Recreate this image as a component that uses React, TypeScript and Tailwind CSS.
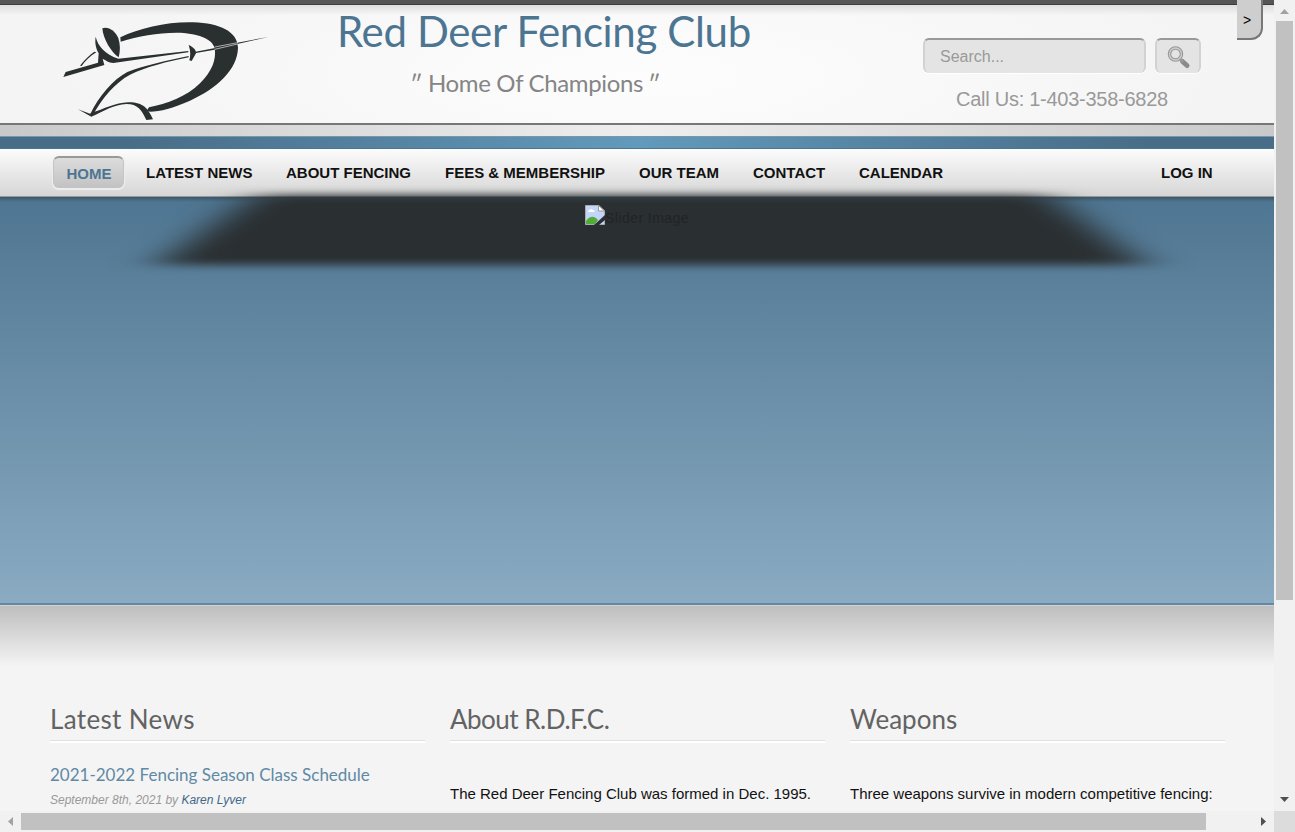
import type { ReactNode } from "react";

const heading = "font-['Lato',sans-serif] whitespace-nowrap";

function Logo() {
  return (
    <svg className="block h-[130px] w-[230px] shrink-0" viewBox="0 0 690 390" fill="#2a2f30">
      <path d="M211 112C270 84 350 65 430 67C510 70 562 94 564 143C562 210 500 265 420 302C370 324 330 335 300 335L290 332L297 322C350 312 410 290 450 250C484 216 500 180 494 145C488 115 440 99 380 98C320 98 265 109 212 125Z" />
      <path d="M157 85C173 78 196 91 205 115C211 133 211 154 206 172C185 158 160 120 157 85Z" />
      <path d="M137 110C143 137 165 163 205 176L415 153V157L190 189C175 188 168 181 158 176L163 195L40 231L47 216L144 188L146 160C138 145 134 130 137 110Z" />
      <path d="M90 197C105 178 120 164 133 155L139 157C120 168 105 184 95 198Z" />
      <path d="M416 135C430 141 439 150 438 160L425 183L418 181C422 168 422 152 416 135Z" />
      <path d="M437 155L495 144L494 149L438 159ZM562 128L655 111L562 132Z" />
      <path d="M494 141L563 128M494 148L563 132" stroke="#eee" strokeWidth="2" fill="none" />
      <path d="M416 168C350 182 285 196 232 216C190 238 147 288 121 342L129 345C155 296 195 248 240 224C290 201 350 185 416 172Z" />
      <path d="M84 328L120 341C165 325 195 309 234 307C280 306 294 326 309 358L289 360C275 330 263 312 230 312C190 314 165 332 124 350Z" />
    </svg>
  );
}

function SearchIcon() {
  return (
    <svg className="ml-[2px] h-6 w-6" viewBox="0 0 24 24" fill="none">
      <path d="M15.5 15.5L20 19.5" stroke="#8b8b8b" strokeWidth="5" strokeLinecap="round" />
      <path d="M12 12L16 16" stroke="#999" strokeWidth="2.5" />
      <circle cx="8.5" cy="8" r="6" stroke="#979797" strokeWidth="3.5" />
      <circle cx="8.5" cy="8" r="6" stroke="#cfcfcf" strokeWidth="1.3" />
    </svg>
  );
}

function Header() {
  return (
    <header className="h-[118px] bg-[radial-gradient(ellipse_600px_150px_at_637px_70px,#fdfdfd,#f4f4f4)]">
      <div className="flex h-[118px] bg-[linear-gradient(#dedede,#dedede00_10px)] pl-[50px]">
        <div className="-mt-[5px]"><Logo /></div>
        <div className="w-[530px] pl-[57px]">
          <h1 className={`${heading} mt-[2px] text-[42px] leading-[48px] tracking-[-0.35px] text-[#4c7592]`}>Red Deer Fencing Club</h1>
          <p className={`${heading} mt-[14px] flex pl-[73px] text-[24px] leading-[28px] tracking-[-0.35px] text-[#858585]`}><span className="w-[18px] tracking-[-3px]">′′</span><span className="w-[220px]">Home Of Champions</span><span className="tracking-[-3px]">′′</span></p>
        </div>
        <div className="ml-[113px] w-[290px] pt-[33px]">
          <div className="flex gap-[9px]">
            <div className="flex h-[35px] w-[223px] items-center rounded-md border-x-2 border-t-2 border-x-[#d2d2d2] border-t-[#999] bg-[#e4e4e4] pl-[15px] text-[16px] text-[#9a9a9a] shadow-[0_1px_1px_white]">Search...</div>
            <div className="flex h-[35px] w-[46px] items-center justify-center rounded-md border-x-2 border-t-2 border-x-[#d2d2d2] border-t-[#999] bg-[#e4e4e4] pt-[2px] shadow-[0_1px_1px_white]"><SearchIcon /></div>
          </div>
          <p className="mt-[14px] pl-[33px] text-[20px] leading-6 tracking-[-0.26px] whitespace-nowrap text-[#999]">Call Us: 1-403-358-6828</p>
        </div>
      </div>
    </header>
  );
}

const links = [
  { label: "LATEST NEWS", width: "w-[140px]" },
  { label: "ABOUT FENCING", width: "w-[159px]" },
  { label: "FEES & MEMBERSHIP", width: "w-[194px]" },
  { label: "OUR TEAM", width: "w-[114px]" },
  { label: "CONTACT", width: "w-[106px]" },
  { label: "CALENDAR", width: "w-[302px]" },
  { label: "LOG IN", width: "w-[60px]" },
];

function Nav() {
  return (
    <nav className="flex h-[48px] items-center border-b border-[#999] bg-linear-to-b from-[#fcfcfc] to-[#d6d6d6] pl-[53px] text-[15px] font-bold whitespace-nowrap text-[#111]">
      <a className="-mt-px mr-[22px] flex h-[32px] w-[71px] items-center justify-center rounded-md border-x border-t-2 border-x-[#c4c4c4] border-t-[#999] bg-linear-to-b from-[#dcdcdc] to-[#c2c2c2] pt-[2px] pl-px text-[#4c7592] shadow-[0_1px_1px_1px_#eee]">HOME</a>
      {links.map((l) => <a key={l.label} className={`pt-[2px] ${l.width}`}>{l.label}</a>)}
    </nav>
  );
}

function BrokenImage() {
  return (
    <svg className="block h-5 w-5" viewBox="0 0 20 20">
      <path d="M0.5 0.5H14L19.5 6V19.5H0.5Z" fill="#c3d6fa" stroke="#aaa" />
      <path d="M3 7C3 5 5 5 6 4C7 4 8 5 8 5C10 5 10 7 9 7Z" fill="white" />
      <path d="M1 19V16C5 10 10 11 13 15L10 19Z" fill="#52ad38" />
      <path d="M20 10L9 20H14L20 15Z" fill="#2a2f31" />
      <path d="M13.5 0.5V6H19.5Z" fill="#fff" stroke="#999" />
    </svg>
  );
}

function Hero() {
  return (
    <section className="relative h-[408px] border-b-2 border-[#6288a5] bg-[linear-gradient(#3c5769,#3c576900_5px),linear-gradient(#4e7591,#8aabc2)]">
      <svg className="absolute -top-3 left-0 h-[110px] w-[1274px]" viewBox="0 0 1274 110">
        <filter id="soft" x="-10%" y="-30%" width="120%" height="160%" colorInterpolationFilters="sRGB"><feGaussianBlur stdDeviation="23 4" /></filter>
        <path d="M256 10H1048L1147 80H156Z" fill="#2a2f31" filter="url(#soft)" />
      </svg>
      <div className="relative flex pt-[8px] pl-[585px] text-[14px] leading-[26px] tracking-[0.45px] text-[#202426]"><BrokenImage /><span>Slider Image</span></div>
    </section>
  );
}

function Column({ title, size, children }: { title: string; size: string; children: ReactNode }) {
  return (
    <section className="w-[375px]">
      <h2 className={`${heading} h-[39px] border-b border-[#e0e0e0] leading-[34px] text-[#636363] shadow-[0_2px_0_white] ${size}`}>{title}</h2>
      {children}
    </section>
  );
}

export default function App() {
  return (
    <div className="flex h-[832px] w-[1295px] flex-col overflow-hidden bg-[#f4f4f4] font-['Liberation_Sans',sans-serif]">
      <div className="flex h-[811px]">
        <main className="relative h-[811px] w-[1274px] overflow-hidden">
          <div className="h-[5px] border-b border-[#3d3d3d] bg-[#555]" />
          <Header />
          <div className="h-[13px] border-t-2 border-[#777] bg-linear-to-r from-[#c9c9c9] via-[#eee] to-[#c9c9c9]" />
          <div className="h-[13px] border-y border-t-[#7797aa] border-b-[#4b7590] bg-linear-to-r from-[#486d88] from-10% via-[#629abb] to-[#486d88] to-90%" />
          <Nav />
          <Hero />
          <div className="h-[206px] border-t border-[#d2d2d2] bg-[linear-gradient(#bebebe,#f4f4f4_60px)] pt-[96px] pl-[50px]">
            <div className="flex gap-[25px]">
              <Column title="Latest News" size="text-[26px] tracking-[0.35px]">
                <h3 className={`${heading} mt-[22px] text-[17px] leading-6 font-normal text-[#6089a5]`}>2021-2022 Fencing Season Class Schedule</h3>
                <p className="mt-[3px] text-[12px] leading-5 text-[#999] italic">September 8th, 2021 by <a className="text-[#3f6887]">Karen Lyver</a></p>
              </Column>
              <Column title="About R.D.F.C." size="text-[26px] tracking-[-0.5px]"><p className="mt-[43px] text-[15px] leading-5 whitespace-nowrap text-[#111]">The Red Deer Fencing Club was formed in Dec. 1995.</p></Column>
              <Column title="Weapons" size="text-[26px]"><p className="mt-[43px] text-[15px] leading-5 whitespace-nowrap text-[#111]">Three weapons survive in modern competitive fencing:</p></Column>
            </div>
          </div>
          <div className="absolute top-0 right-[11px] h-[40px] w-[26px] rounded-br-[12px] border-r-2 border-b-2 border-[#777] bg-[#cecece] pt-[10px] pl-[6px] text-[14px] leading-5 text-black">&gt;</div>
        </main>
        <aside className="flex w-[21px] flex-col items-center bg-[#f1f1f1] pt-[9px]">
          <svg className="h-[5px] w-[9px]" viewBox="0 0 9 5"><path d="M0 5L4.5 0L9 5Z" fill="#a2a2a2" /></svg>
          <div className="mt-[7px] h-[579px] w-[17px] bg-[#c1c1c1]" />
          <svg className="mt-[197px] h-[5px] w-[9px]" viewBox="0 0 9 5"><path d="M0 0H9L4.5 5Z" fill="#505050" /></svg>
        </aside>
      </div>
      <footer className="flex h-[21px] items-center bg-[#f1f1f1] pl-[8px]">
        <svg className="h-[9px] w-[5px]" viewBox="0 0 5 9"><path d="M5 0V9L0 4.5Z" fill="#a2a2a2" /></svg>
        <div className="ml-[8px] h-[17px] w-[1185px] bg-[#c1c1c1]" />
        <svg className="ml-[55px] h-[9px] w-[5px]" viewBox="0 0 5 9"><path d="M0 0V9L5 4.5Z" fill="#505050" /></svg>
        <div className="ml-auto h-[21px] w-[21px] bg-[#dcdcdc]" />
      </footer>
    </div>
  );
}
